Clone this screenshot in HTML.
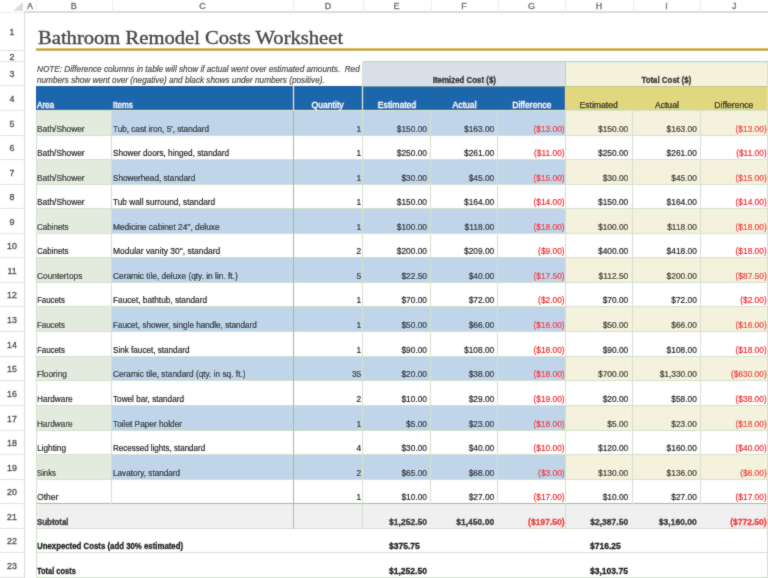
<!DOCTYPE html>
<html><head><meta charset="utf-8"><style>
html,body{margin:0;padding:0;}
body{width:768px;height:578px;overflow:hidden;position:relative;background:#fff;font-family:'Liberation Sans', sans-serif;}
#w{position:absolute;left:0;top:0;width:768px;height:578px;filter:url(#bl);}
#w>div{position:absolute;}

.t{white-space:nowrap;-webkit-text-stroke:0.18px currentColor;}
</style></head><body><svg width="0" height="0" style="position:absolute"><filter id="bl" x="0" y="0" width="100%" height="100%"><feConvolveMatrix order="3" kernelMatrix="1 2 1 2 20 2 1 2 1" divisor="32" edgeMode="duplicate"/></filter></svg><div id="w">
<div style="left:0.00px;top:0.00px;width:768.00px;height:12.00px;background:#ffffff"></div>
<div style="left:24.00px;top:11.00px;width:744.00px;height:2.00px;background:#dcdcdc"></div>
<div style="left:0.00px;top:11.50px;width:24.00px;height:1.00px;background:#f0f0f0"></div>
<div style="left:23.50px;top:12.00px;width:1.50px;height:566.00px;background:#dadada"></div>
<svg style="position:absolute;left:13px;top:2px" width="10" height="9"><polygon points="10,0 10,9 0,9" fill="#dcdcdc"/></svg>
<div class="t" style="left:24.00px;width:12.00px;text-align:center;top:1.78px;font-size:9px;line-height:9px;color:#6a6a6a;font-weight:normal;font-style:normal;font-family:'Liberation Sans', sans-serif;-webkit-text-stroke:0.4px #6a6a6a;">A</div>
<div style="left:36.00px;top:0.00px;width:1.00px;height:12.00px;background:#ececec"></div>
<div class="t" style="left:36.00px;width:75.50px;text-align:center;top:1.78px;font-size:9px;line-height:9px;color:#6a6a6a;font-weight:normal;font-style:normal;font-family:'Liberation Sans', sans-serif;-webkit-text-stroke:0.4px #6a6a6a;">B</div>
<div style="left:111.50px;top:0.00px;width:1.00px;height:12.00px;background:#ececec"></div>
<div class="t" style="left:111.50px;width:181.80px;text-align:center;top:1.78px;font-size:9px;line-height:9px;color:#6a6a6a;font-weight:normal;font-style:normal;font-family:'Liberation Sans', sans-serif;-webkit-text-stroke:0.4px #6a6a6a;">C</div>
<div style="left:293.30px;top:0.00px;width:1.00px;height:12.00px;background:#ececec"></div>
<div class="t" style="left:293.30px;width:69.20px;text-align:center;top:1.78px;font-size:9px;line-height:9px;color:#6a6a6a;font-weight:normal;font-style:normal;font-family:'Liberation Sans', sans-serif;-webkit-text-stroke:0.4px #6a6a6a;">D</div>
<div style="left:362.50px;top:0.00px;width:1.00px;height:12.00px;background:#ececec"></div>
<div class="t" style="left:362.50px;width:68.00px;text-align:center;top:1.78px;font-size:9px;line-height:9px;color:#6a6a6a;font-weight:normal;font-style:normal;font-family:'Liberation Sans', sans-serif;-webkit-text-stroke:0.4px #6a6a6a;">E</div>
<div style="left:430.50px;top:0.00px;width:1.00px;height:12.00px;background:#ececec"></div>
<div class="t" style="left:430.50px;width:67.20px;text-align:center;top:1.78px;font-size:9px;line-height:9px;color:#6a6a6a;font-weight:normal;font-style:normal;font-family:'Liberation Sans', sans-serif;-webkit-text-stroke:0.4px #6a6a6a;">F</div>
<div style="left:497.70px;top:0.00px;width:1.00px;height:12.00px;background:#ececec"></div>
<div class="t" style="left:497.70px;width:67.60px;text-align:center;top:1.78px;font-size:9px;line-height:9px;color:#6a6a6a;font-weight:normal;font-style:normal;font-family:'Liberation Sans', sans-serif;-webkit-text-stroke:0.4px #6a6a6a;">G</div>
<div style="left:565.30px;top:0.00px;width:1.00px;height:12.00px;background:#ececec"></div>
<div class="t" style="left:565.30px;width:67.20px;text-align:center;top:1.78px;font-size:9px;line-height:9px;color:#6a6a6a;font-weight:normal;font-style:normal;font-family:'Liberation Sans', sans-serif;-webkit-text-stroke:0.4px #6a6a6a;">H</div>
<div style="left:632.50px;top:0.00px;width:1.00px;height:12.00px;background:#ececec"></div>
<div class="t" style="left:632.50px;width:67.80px;text-align:center;top:1.78px;font-size:9px;line-height:9px;color:#6a6a6a;font-weight:normal;font-style:normal;font-family:'Liberation Sans', sans-serif;-webkit-text-stroke:0.4px #6a6a6a;">I</div>
<div style="left:700.30px;top:0.00px;width:1.00px;height:12.00px;background:#ececec"></div>
<div class="t" style="left:700.30px;width:67.70px;text-align:center;top:1.78px;font-size:9px;line-height:9px;color:#6a6a6a;font-weight:normal;font-style:normal;font-family:'Liberation Sans', sans-serif;-webkit-text-stroke:0.4px #6a6a6a;">J</div>
<div class="t" style="left:0.00px;width:24.00px;text-align:center;top:27.80px;font-size:8.8px;line-height:8.8px;color:#555;font-weight:normal;font-style:normal;font-family:'Liberation Sans', sans-serif;-webkit-text-stroke:0.35px #555;">1</div>
<div style="left:0.00px;top:50.00px;width:24.00px;height:1.00px;background:#e2e2e2"></div>
<div class="t" style="left:0.00px;width:24.00px;text-align:center;top:52.55px;font-size:8.8px;line-height:8.8px;color:#555;font-weight:normal;font-style:normal;font-family:'Liberation Sans', sans-serif;-webkit-text-stroke:0.35px #555;">2</div>
<div style="left:0.00px;top:61.00px;width:24.00px;height:1.00px;background:#e2e2e2"></div>
<div class="t" style="left:0.00px;width:24.00px;text-align:center;top:70.05px;font-size:8.8px;line-height:8.8px;color:#555;font-weight:normal;font-style:normal;font-family:'Liberation Sans', sans-serif;-webkit-text-stroke:0.35px #555;">3</div>
<div style="left:0.00px;top:85.00px;width:24.00px;height:1.00px;background:#e2e2e2"></div>
<div class="t" style="left:0.00px;width:24.00px;text-align:center;top:94.55px;font-size:8.8px;line-height:8.8px;color:#555;font-weight:normal;font-style:normal;font-family:'Liberation Sans', sans-serif;-webkit-text-stroke:0.35px #555;">4</div>
<div style="left:0.00px;top:110.00px;width:24.00px;height:1.00px;background:#e2e2e2"></div>
<div class="t" style="left:0.00px;width:24.00px;text-align:center;top:119.55px;font-size:8.8px;line-height:8.8px;color:#555;font-weight:normal;font-style:normal;font-family:'Liberation Sans', sans-serif;-webkit-text-stroke:0.35px #555;">5</div>
<div style="left:0.00px;top:135.00px;width:24.00px;height:1.00px;background:#e2e2e2"></div>
<div class="t" style="left:0.00px;width:24.00px;text-align:center;top:144.05px;font-size:8.8px;line-height:8.8px;color:#555;font-weight:normal;font-style:normal;font-family:'Liberation Sans', sans-serif;-webkit-text-stroke:0.35px #555;">6</div>
<div style="left:0.00px;top:159.00px;width:24.00px;height:1.00px;background:#e2e2e2"></div>
<div class="t" style="left:0.00px;width:24.00px;text-align:center;top:168.55px;font-size:8.8px;line-height:8.8px;color:#555;font-weight:normal;font-style:normal;font-family:'Liberation Sans', sans-serif;-webkit-text-stroke:0.35px #555;">7</div>
<div style="left:0.00px;top:184.00px;width:24.00px;height:1.00px;background:#e2e2e2"></div>
<div class="t" style="left:0.00px;width:24.00px;text-align:center;top:193.05px;font-size:8.8px;line-height:8.8px;color:#555;font-weight:normal;font-style:normal;font-family:'Liberation Sans', sans-serif;-webkit-text-stroke:0.35px #555;">8</div>
<div style="left:0.00px;top:208.00px;width:24.00px;height:1.00px;background:#e2e2e2"></div>
<div class="t" style="left:0.00px;width:24.00px;text-align:center;top:217.55px;font-size:8.8px;line-height:8.8px;color:#555;font-weight:normal;font-style:normal;font-family:'Liberation Sans', sans-serif;-webkit-text-stroke:0.35px #555;">9</div>
<div style="left:0.00px;top:233.00px;width:24.00px;height:1.00px;background:#e2e2e2"></div>
<div class="t" style="left:0.00px;width:24.00px;text-align:center;top:242.05px;font-size:8.8px;line-height:8.8px;color:#555;font-weight:normal;font-style:normal;font-family:'Liberation Sans', sans-serif;-webkit-text-stroke:0.35px #555;">10</div>
<div style="left:0.00px;top:257.00px;width:24.00px;height:1.00px;background:#e2e2e2"></div>
<div class="t" style="left:0.00px;width:24.00px;text-align:center;top:266.55px;font-size:8.8px;line-height:8.8px;color:#555;font-weight:normal;font-style:normal;font-family:'Liberation Sans', sans-serif;-webkit-text-stroke:0.35px #555;">11</div>
<div style="left:0.00px;top:282.00px;width:24.00px;height:1.00px;background:#e2e2e2"></div>
<div class="t" style="left:0.00px;width:24.00px;text-align:center;top:291.05px;font-size:8.8px;line-height:8.8px;color:#555;font-weight:normal;font-style:normal;font-family:'Liberation Sans', sans-serif;-webkit-text-stroke:0.35px #555;">12</div>
<div style="left:0.00px;top:306.00px;width:24.00px;height:1.00px;background:#e2e2e2"></div>
<div class="t" style="left:0.00px;width:24.00px;text-align:center;top:315.55px;font-size:8.8px;line-height:8.8px;color:#555;font-weight:normal;font-style:normal;font-family:'Liberation Sans', sans-serif;-webkit-text-stroke:0.35px #555;">13</div>
<div style="left:0.00px;top:331.00px;width:24.00px;height:1.00px;background:#e2e2e2"></div>
<div class="t" style="left:0.00px;width:24.00px;text-align:center;top:340.55px;font-size:8.8px;line-height:8.8px;color:#555;font-weight:normal;font-style:normal;font-family:'Liberation Sans', sans-serif;-webkit-text-stroke:0.35px #555;">14</div>
<div style="left:0.00px;top:356.00px;width:24.00px;height:1.00px;background:#e2e2e2"></div>
<div class="t" style="left:0.00px;width:24.00px;text-align:center;top:365.05px;font-size:8.8px;line-height:8.8px;color:#555;font-weight:normal;font-style:normal;font-family:'Liberation Sans', sans-serif;-webkit-text-stroke:0.35px #555;">15</div>
<div style="left:0.00px;top:380.00px;width:24.00px;height:1.00px;background:#e2e2e2"></div>
<div class="t" style="left:0.00px;width:24.00px;text-align:center;top:389.55px;font-size:8.8px;line-height:8.8px;color:#555;font-weight:normal;font-style:normal;font-family:'Liberation Sans', sans-serif;-webkit-text-stroke:0.35px #555;">16</div>
<div style="left:0.00px;top:405.00px;width:24.00px;height:1.00px;background:#e2e2e2"></div>
<div class="t" style="left:0.00px;width:24.00px;text-align:center;top:414.55px;font-size:8.8px;line-height:8.8px;color:#555;font-weight:normal;font-style:normal;font-family:'Liberation Sans', sans-serif;-webkit-text-stroke:0.35px #555;">17</div>
<div style="left:0.00px;top:430.00px;width:24.00px;height:1.00px;background:#e2e2e2"></div>
<div class="t" style="left:0.00px;width:24.00px;text-align:center;top:439.05px;font-size:8.8px;line-height:8.8px;color:#555;font-weight:normal;font-style:normal;font-family:'Liberation Sans', sans-serif;-webkit-text-stroke:0.35px #555;">18</div>
<div style="left:0.00px;top:454.00px;width:24.00px;height:1.00px;background:#e2e2e2"></div>
<div class="t" style="left:0.00px;width:24.00px;text-align:center;top:463.55px;font-size:8.8px;line-height:8.8px;color:#555;font-weight:normal;font-style:normal;font-family:'Liberation Sans', sans-serif;-webkit-text-stroke:0.35px #555;">19</div>
<div style="left:0.00px;top:479.00px;width:24.00px;height:1.00px;background:#e2e2e2"></div>
<div class="t" style="left:0.00px;width:24.00px;text-align:center;top:488.05px;font-size:8.8px;line-height:8.8px;color:#555;font-weight:normal;font-style:normal;font-family:'Liberation Sans', sans-serif;-webkit-text-stroke:0.35px #555;">20</div>
<div style="left:0.00px;top:503.00px;width:24.00px;height:1.00px;background:#e2e2e2"></div>
<div class="t" style="left:0.00px;width:24.00px;text-align:center;top:512.55px;font-size:8.8px;line-height:8.8px;color:#555;font-weight:normal;font-style:normal;font-family:'Liberation Sans', sans-serif;-webkit-text-stroke:0.35px #555;">21</div>
<div style="left:0.00px;top:528.00px;width:24.00px;height:1.00px;background:#e2e2e2"></div>
<div class="t" style="left:0.00px;width:24.00px;text-align:center;top:537.05px;font-size:8.8px;line-height:8.8px;color:#555;font-weight:normal;font-style:normal;font-family:'Liberation Sans', sans-serif;-webkit-text-stroke:0.35px #555;">22</div>
<div style="left:0.00px;top:552.00px;width:24.00px;height:1.00px;background:#e2e2e2"></div>
<div class="t" style="left:0.00px;width:24.00px;text-align:center;top:561.55px;font-size:8.8px;line-height:8.8px;color:#555;font-weight:normal;font-style:normal;font-family:'Liberation Sans', sans-serif;-webkit-text-stroke:0.35px #555;">23</div>
<div style="left:0.00px;top:577.00px;width:24.00px;height:1.00px;background:#e2e2e2"></div>
<div class="t" style="left:37.90px;top:29.06px;font-size:18.6px;line-height:18.6px;color:#474747;font-weight:normal;font-style:normal;font-family:'Liberation Serif', serif;-webkit-text-stroke:0.35px #474747;transform:scaleX(1.1075743962021307);transform-origin:0 0;">Bathroom Remodel Costs Worksheet</div>
<div style="left:36.00px;top:48.00px;width:732.00px;height:1.00px;background:#dcc277"></div>
<div style="left:36.00px;top:49.00px;width:732.00px;height:1.00px;background:#c49a18"></div>
<div style="left:36.00px;top:50.00px;width:732.00px;height:1.00px;background:#d6b862"></div>
<div class="t" style="left:37.00px;top:65.08px;font-size:9.0px;line-height:9.0px;color:#4d4d4d;font-weight:normal;font-style:italic;font-family:'Liberation Sans', sans-serif;-webkit-text-stroke:0.22px #4d4d4d;transform:scaleX(0.91);transform-origin:0 0;">NOTE: Difference columns in table will show if actual went over estimated amounts.&nbsp; Red</div>
<div class="t" style="left:37.00px;top:75.68px;font-size:9.0px;line-height:9.0px;color:#4d4d4d;font-weight:normal;font-style:italic;font-family:'Liberation Sans', sans-serif;-webkit-text-stroke:0.22px #4d4d4d;transform:scaleX(0.91);transform-origin:0 0;">numbers show went over (negative) and black shows under numbers (positive).</div>
<div style="left:362.50px;top:61.50px;width:202.80px;height:24.00px;background:#dadfea"></div>
<div style="left:565.30px;top:61.50px;width:202.70px;height:24.00px;background:#f5f2dc"></div>
<div class="t" style="left:362.50px;width:202.80px;text-align:center;top:75.97px;font-size:8.9px;line-height:8.9px;color:#1c1c1c;font-weight:bold;font-style:normal;font-family:'Liberation Sans', sans-serif;-webkit-text-stroke:0.3px currentColor;transform:scaleX(0.89);transform-origin:50% 0;">Itemized Cost ($)</div>
<div class="t" style="left:565.30px;width:202.70px;text-align:center;top:75.97px;font-size:8.9px;line-height:8.9px;color:#1c1c1c;font-weight:bold;font-style:normal;font-family:'Liberation Sans', sans-serif;-webkit-text-stroke:0.3px currentColor;transform:scaleX(0.89);transform-origin:50% 0;">Total Cost ($)</div>
<div style="left:36.00px;top:85.50px;width:529.30px;height:25.00px;background:#1a66ab"></div>
<div style="left:565.30px;top:85.50px;width:202.70px;height:25.00px;background:#e1d77e"></div>
<div class="t" style="left:37.00px;top:100.57px;font-size:8.9px;line-height:8.9px;color:#fff;font-weight:normal;font-style:normal;font-family:'Liberation Sans', sans-serif;-webkit-text-stroke:0.3px #fff;transform:scaleX(0.91);transform-origin:0 0;">Area</div>
<div class="t" style="left:113.00px;top:100.57px;font-size:8.9px;line-height:8.9px;color:#fff;font-weight:normal;font-style:normal;font-family:'Liberation Sans', sans-serif;-webkit-text-stroke:0.3px #fff;transform:scaleX(0.91);transform-origin:0 0;">Items</div>
<div class="t" style="left:293.30px;width:69.20px;text-align:center;top:100.57px;font-size:8.9px;line-height:8.9px;color:#fff;font-weight:normal;font-style:normal;font-family:'Liberation Sans', sans-serif;-webkit-text-stroke:0.3px #fff;transform:scaleX(0.97);transform-origin:50% 0;">Quantity</div>
<div class="t" style="left:362.50px;width:68.00px;text-align:center;top:100.57px;font-size:8.9px;line-height:8.9px;color:#fff;font-weight:normal;font-style:normal;font-family:'Liberation Sans', sans-serif;-webkit-text-stroke:0.3px #fff;transform:scaleX(0.97);transform-origin:50% 0;">Estimated</div>
<div class="t" style="left:565.30px;width:67.20px;text-align:center;top:100.57px;font-size:8.9px;line-height:8.9px;color:#1c1c1c;font-weight:normal;font-style:normal;font-family:'Liberation Sans', sans-serif;-webkit-text-stroke:0.25px #1c1c1c;transform:scaleX(0.97);transform-origin:50% 0;">Estimated</div>
<div class="t" style="left:430.50px;width:67.20px;text-align:center;top:100.57px;font-size:8.9px;line-height:8.9px;color:#fff;font-weight:normal;font-style:normal;font-family:'Liberation Sans', sans-serif;-webkit-text-stroke:0.3px #fff;transform:scaleX(0.97);transform-origin:50% 0;">Actual</div>
<div class="t" style="left:632.50px;width:67.80px;text-align:center;top:100.57px;font-size:8.9px;line-height:8.9px;color:#1c1c1c;font-weight:normal;font-style:normal;font-family:'Liberation Sans', sans-serif;-webkit-text-stroke:0.25px #1c1c1c;transform:scaleX(0.97);transform-origin:50% 0;">Actual</div>
<div class="t" style="left:497.70px;width:67.60px;text-align:center;top:100.57px;font-size:8.9px;line-height:8.9px;color:#fff;font-weight:normal;font-style:normal;font-family:'Liberation Sans', sans-serif;-webkit-text-stroke:0.3px #fff;transform:scaleX(0.97);transform-origin:50% 0;">Difference</div>
<div class="t" style="left:700.30px;width:67.70px;text-align:center;top:100.57px;font-size:8.9px;line-height:8.9px;color:#1c1c1c;font-weight:normal;font-style:normal;font-family:'Liberation Sans', sans-serif;-webkit-text-stroke:0.25px #1c1c1c;transform:scaleX(0.97);transform-origin:50% 0;">Difference</div>
<div style="left:36.00px;top:110.50px;width:75.50px;height:25.00px;background:#e3ebdf"></div>
<div style="left:111.50px;top:110.50px;width:453.80px;height:25.00px;background:#c0d5e9"></div>
<div style="left:565.30px;top:110.50px;width:202.70px;height:25.00px;background:#f4f1dc"></div>
<div class="t" style="left:37.00px;top:125.37px;font-size:8.9px;line-height:8.9px;color:#1c1c1c;font-weight:normal;font-style:normal;font-family:'Liberation Sans', sans-serif;transform:scaleX(0.936739111112179);transform-origin:0 0;">Bath/Shower</div>
<div class="t" style="left:113.00px;top:125.37px;font-size:8.9px;line-height:8.9px;color:#1c1c1c;font-weight:normal;font-style:normal;font-family:'Liberation Sans', sans-serif;transform:scaleX(0.9189501211740209);transform-origin:0 0;">Tub, cast iron, 5', standard</div>
<div class="t" style="left:293.30px;width:68.20px;text-align:right;top:125.11px;font-size:9.2px;line-height:9.2px;color:#1c1c1c;font-weight:normal;font-style:normal;font-family:'Liberation Sans', sans-serif;transform:scaleX(0.9093478260869565);transform-origin:100% 0;">1</div>
<div class="t" style="left:362.50px;width:64.00px;text-align:right;top:125.11px;font-size:9.2px;line-height:9.2px;color:#1c1c1c;font-weight:normal;font-style:normal;font-family:'Liberation Sans', sans-serif;transform:scaleX(0.9093478260869565);transform-origin:100% 0;">$150.00</div>
<div class="t" style="left:430.50px;width:63.20px;text-align:right;top:125.11px;font-size:9.2px;line-height:9.2px;color:#1c1c1c;font-weight:normal;font-style:normal;font-family:'Liberation Sans', sans-serif;transform:scaleX(0.9093478260869565);transform-origin:100% 0;">$163.00</div>
<div class="t" style="left:497.70px;width:66.60px;text-align:right;top:125.11px;font-size:9.2px;line-height:9.2px;color:#f0262b;font-weight:normal;font-style:normal;font-family:'Liberation Sans', sans-serif;transform:scaleX(0.9093478260869565);transform-origin:100% 0;">($13.00)</div>
<div class="t" style="left:565.30px;width:63.20px;text-align:right;top:125.11px;font-size:9.2px;line-height:9.2px;color:#1c1c1c;font-weight:normal;font-style:normal;font-family:'Liberation Sans', sans-serif;transform:scaleX(0.9093478260869565);transform-origin:100% 0;">$150.00</div>
<div class="t" style="left:632.50px;width:63.80px;text-align:right;top:125.11px;font-size:9.2px;line-height:9.2px;color:#1c1c1c;font-weight:normal;font-style:normal;font-family:'Liberation Sans', sans-serif;transform:scaleX(0.9093478260869565);transform-origin:100% 0;">$163.00</div>
<div class="t" style="left:700.30px;width:66.70px;text-align:right;top:125.11px;font-size:9.2px;line-height:9.2px;color:#f0262b;font-weight:normal;font-style:normal;font-family:'Liberation Sans', sans-serif;transform:scaleX(0.9093478260869565);transform-origin:100% 0;">($13.00)</div>
<div class="t" style="left:37.00px;top:149.37px;font-size:8.9px;line-height:8.9px;color:#1c1c1c;font-weight:normal;font-style:normal;font-family:'Liberation Sans', sans-serif;transform:scaleX(0.936739111112179);transform-origin:0 0;">Bath/Shower</div>
<div class="t" style="left:113.00px;top:149.37px;font-size:8.9px;line-height:8.9px;color:#1c1c1c;font-weight:normal;font-style:normal;font-family:'Liberation Sans', sans-serif;transform:scaleX(0.9228196957994869);transform-origin:0 0;">Shower doors, hinged, standard</div>
<div class="t" style="left:293.30px;width:68.20px;text-align:right;top:149.11px;font-size:9.2px;line-height:9.2px;color:#1c1c1c;font-weight:normal;font-style:normal;font-family:'Liberation Sans', sans-serif;transform:scaleX(0.9093478260869565);transform-origin:100% 0;">1</div>
<div class="t" style="left:362.50px;width:64.00px;text-align:right;top:149.11px;font-size:9.2px;line-height:9.2px;color:#1c1c1c;font-weight:normal;font-style:normal;font-family:'Liberation Sans', sans-serif;transform:scaleX(0.9093478260869565);transform-origin:100% 0;">$250.00</div>
<div class="t" style="left:430.50px;width:63.20px;text-align:right;top:149.11px;font-size:9.2px;line-height:9.2px;color:#1c1c1c;font-weight:normal;font-style:normal;font-family:'Liberation Sans', sans-serif;transform:scaleX(0.9093478260869565);transform-origin:100% 0;">$261.00</div>
<div class="t" style="left:497.70px;width:66.60px;text-align:right;top:149.11px;font-size:9.2px;line-height:9.2px;color:#f0262b;font-weight:normal;font-style:normal;font-family:'Liberation Sans', sans-serif;transform:scaleX(0.9093478260869565);transform-origin:100% 0;">($11.00)</div>
<div class="t" style="left:565.30px;width:63.20px;text-align:right;top:149.11px;font-size:9.2px;line-height:9.2px;color:#1c1c1c;font-weight:normal;font-style:normal;font-family:'Liberation Sans', sans-serif;transform:scaleX(0.9093478260869565);transform-origin:100% 0;">$250.00</div>
<div class="t" style="left:632.50px;width:63.80px;text-align:right;top:149.11px;font-size:9.2px;line-height:9.2px;color:#1c1c1c;font-weight:normal;font-style:normal;font-family:'Liberation Sans', sans-serif;transform:scaleX(0.9093478260869565);transform-origin:100% 0;">$261.00</div>
<div class="t" style="left:700.30px;width:66.70px;text-align:right;top:149.11px;font-size:9.2px;line-height:9.2px;color:#f0262b;font-weight:normal;font-style:normal;font-family:'Liberation Sans', sans-serif;transform:scaleX(0.9093478260869565);transform-origin:100% 0;">($11.00)</div>
<div style="left:36.00px;top:159.50px;width:75.50px;height:25.00px;background:#e3ebdf"></div>
<div style="left:111.50px;top:159.50px;width:453.80px;height:25.00px;background:#c0d5e9"></div>
<div style="left:565.30px;top:159.50px;width:202.70px;height:25.00px;background:#f4f1dc"></div>
<div class="t" style="left:37.00px;top:174.37px;font-size:8.9px;line-height:8.9px;color:#1c1c1c;font-weight:normal;font-style:normal;font-family:'Liberation Sans', sans-serif;transform:scaleX(0.936739111112179);transform-origin:0 0;">Bath/Shower</div>
<div class="t" style="left:113.00px;top:174.37px;font-size:8.9px;line-height:8.9px;color:#1c1c1c;font-weight:normal;font-style:normal;font-family:'Liberation Sans', sans-serif;transform:scaleX(0.9215641676143821);transform-origin:0 0;">Showerhead, standard</div>
<div class="t" style="left:293.30px;width:68.20px;text-align:right;top:174.11px;font-size:9.2px;line-height:9.2px;color:#1c1c1c;font-weight:normal;font-style:normal;font-family:'Liberation Sans', sans-serif;transform:scaleX(0.9093478260869565);transform-origin:100% 0;">1</div>
<div class="t" style="left:362.50px;width:64.00px;text-align:right;top:174.11px;font-size:9.2px;line-height:9.2px;color:#1c1c1c;font-weight:normal;font-style:normal;font-family:'Liberation Sans', sans-serif;transform:scaleX(0.9093478260869565);transform-origin:100% 0;">$30.00</div>
<div class="t" style="left:430.50px;width:63.20px;text-align:right;top:174.11px;font-size:9.2px;line-height:9.2px;color:#1c1c1c;font-weight:normal;font-style:normal;font-family:'Liberation Sans', sans-serif;transform:scaleX(0.9093478260869565);transform-origin:100% 0;">$45.00</div>
<div class="t" style="left:497.70px;width:66.60px;text-align:right;top:174.11px;font-size:9.2px;line-height:9.2px;color:#f0262b;font-weight:normal;font-style:normal;font-family:'Liberation Sans', sans-serif;transform:scaleX(0.9093478260869565);transform-origin:100% 0;">($15.00)</div>
<div class="t" style="left:565.30px;width:63.20px;text-align:right;top:174.11px;font-size:9.2px;line-height:9.2px;color:#1c1c1c;font-weight:normal;font-style:normal;font-family:'Liberation Sans', sans-serif;transform:scaleX(0.9093478260869565);transform-origin:100% 0;">$30.00</div>
<div class="t" style="left:632.50px;width:63.80px;text-align:right;top:174.11px;font-size:9.2px;line-height:9.2px;color:#1c1c1c;font-weight:normal;font-style:normal;font-family:'Liberation Sans', sans-serif;transform:scaleX(0.9093478260869565);transform-origin:100% 0;">$45.00</div>
<div class="t" style="left:700.30px;width:66.70px;text-align:right;top:174.11px;font-size:9.2px;line-height:9.2px;color:#f0262b;font-weight:normal;font-style:normal;font-family:'Liberation Sans', sans-serif;transform:scaleX(0.9093478260869565);transform-origin:100% 0;">($15.00)</div>
<div class="t" style="left:37.00px;top:198.37px;font-size:8.9px;line-height:8.9px;color:#1c1c1c;font-weight:normal;font-style:normal;font-family:'Liberation Sans', sans-serif;transform:scaleX(0.936739111112179);transform-origin:0 0;">Bath/Shower</div>
<div class="t" style="left:113.00px;top:198.37px;font-size:8.9px;line-height:8.9px;color:#1c1c1c;font-weight:normal;font-style:normal;font-family:'Liberation Sans', sans-serif;transform:scaleX(0.9317995927659474);transform-origin:0 0;">Tub wall surround, standard</div>
<div class="t" style="left:293.30px;width:68.20px;text-align:right;top:198.11px;font-size:9.2px;line-height:9.2px;color:#1c1c1c;font-weight:normal;font-style:normal;font-family:'Liberation Sans', sans-serif;transform:scaleX(0.9093478260869565);transform-origin:100% 0;">1</div>
<div class="t" style="left:362.50px;width:64.00px;text-align:right;top:198.11px;font-size:9.2px;line-height:9.2px;color:#1c1c1c;font-weight:normal;font-style:normal;font-family:'Liberation Sans', sans-serif;transform:scaleX(0.9093478260869565);transform-origin:100% 0;">$150.00</div>
<div class="t" style="left:430.50px;width:63.20px;text-align:right;top:198.11px;font-size:9.2px;line-height:9.2px;color:#1c1c1c;font-weight:normal;font-style:normal;font-family:'Liberation Sans', sans-serif;transform:scaleX(0.9093478260869565);transform-origin:100% 0;">$164.00</div>
<div class="t" style="left:497.70px;width:66.60px;text-align:right;top:198.11px;font-size:9.2px;line-height:9.2px;color:#f0262b;font-weight:normal;font-style:normal;font-family:'Liberation Sans', sans-serif;transform:scaleX(0.9093478260869565);transform-origin:100% 0;">($14.00)</div>
<div class="t" style="left:565.30px;width:63.20px;text-align:right;top:198.11px;font-size:9.2px;line-height:9.2px;color:#1c1c1c;font-weight:normal;font-style:normal;font-family:'Liberation Sans', sans-serif;transform:scaleX(0.9093478260869565);transform-origin:100% 0;">$150.00</div>
<div class="t" style="left:632.50px;width:63.80px;text-align:right;top:198.11px;font-size:9.2px;line-height:9.2px;color:#1c1c1c;font-weight:normal;font-style:normal;font-family:'Liberation Sans', sans-serif;transform:scaleX(0.9093478260869565);transform-origin:100% 0;">$164.00</div>
<div class="t" style="left:700.30px;width:66.70px;text-align:right;top:198.11px;font-size:9.2px;line-height:9.2px;color:#f0262b;font-weight:normal;font-style:normal;font-family:'Liberation Sans', sans-serif;transform:scaleX(0.9093478260869565);transform-origin:100% 0;">($14.00)</div>
<div style="left:36.00px;top:208.50px;width:75.50px;height:25.00px;background:#e3ebdf"></div>
<div style="left:111.50px;top:208.50px;width:453.80px;height:25.00px;background:#c0d5e9"></div>
<div style="left:565.30px;top:208.50px;width:202.70px;height:25.00px;background:#f4f1dc"></div>
<div class="t" style="left:37.00px;top:223.37px;font-size:8.9px;line-height:8.9px;color:#1c1c1c;font-weight:normal;font-style:normal;font-family:'Liberation Sans', sans-serif;transform:scaleX(0.9021444764093658);transform-origin:0 0;">Cabinets</div>
<div class="t" style="left:113.00px;top:223.37px;font-size:8.9px;line-height:8.9px;color:#1c1c1c;font-weight:normal;font-style:normal;font-family:'Liberation Sans', sans-serif;transform:scaleX(0.942799514193447);transform-origin:0 0;">Medicine cabinet 24&quot;, deluxe</div>
<div class="t" style="left:293.30px;width:68.20px;text-align:right;top:223.11px;font-size:9.2px;line-height:9.2px;color:#1c1c1c;font-weight:normal;font-style:normal;font-family:'Liberation Sans', sans-serif;transform:scaleX(0.9093478260869565);transform-origin:100% 0;">1</div>
<div class="t" style="left:362.50px;width:64.00px;text-align:right;top:223.11px;font-size:9.2px;line-height:9.2px;color:#1c1c1c;font-weight:normal;font-style:normal;font-family:'Liberation Sans', sans-serif;transform:scaleX(0.9093478260869565);transform-origin:100% 0;">$100.00</div>
<div class="t" style="left:430.50px;width:63.20px;text-align:right;top:223.11px;font-size:9.2px;line-height:9.2px;color:#1c1c1c;font-weight:normal;font-style:normal;font-family:'Liberation Sans', sans-serif;transform:scaleX(0.9093478260869565);transform-origin:100% 0;">$118.00</div>
<div class="t" style="left:497.70px;width:66.60px;text-align:right;top:223.11px;font-size:9.2px;line-height:9.2px;color:#f0262b;font-weight:normal;font-style:normal;font-family:'Liberation Sans', sans-serif;transform:scaleX(0.9093478260869565);transform-origin:100% 0;">($18.00)</div>
<div class="t" style="left:565.30px;width:63.20px;text-align:right;top:223.11px;font-size:9.2px;line-height:9.2px;color:#1c1c1c;font-weight:normal;font-style:normal;font-family:'Liberation Sans', sans-serif;transform:scaleX(0.9093478260869565);transform-origin:100% 0;">$100.00</div>
<div class="t" style="left:632.50px;width:63.80px;text-align:right;top:223.11px;font-size:9.2px;line-height:9.2px;color:#1c1c1c;font-weight:normal;font-style:normal;font-family:'Liberation Sans', sans-serif;transform:scaleX(0.9093478260869565);transform-origin:100% 0;">$118.00</div>
<div class="t" style="left:700.30px;width:66.70px;text-align:right;top:223.11px;font-size:9.2px;line-height:9.2px;color:#f0262b;font-weight:normal;font-style:normal;font-family:'Liberation Sans', sans-serif;transform:scaleX(0.9093478260869565);transform-origin:100% 0;">($18.00)</div>
<div class="t" style="left:37.00px;top:247.37px;font-size:8.9px;line-height:8.9px;color:#1c1c1c;font-weight:normal;font-style:normal;font-family:'Liberation Sans', sans-serif;transform:scaleX(0.9021444764093658);transform-origin:0 0;">Cabinets</div>
<div class="t" style="left:113.00px;top:247.37px;font-size:8.9px;line-height:8.9px;color:#1c1c1c;font-weight:normal;font-style:normal;font-family:'Liberation Sans', sans-serif;transform:scaleX(0.9523310942578549);transform-origin:0 0;">Modular vanity 30&quot;, standard</div>
<div class="t" style="left:293.30px;width:68.20px;text-align:right;top:247.11px;font-size:9.2px;line-height:9.2px;color:#1c1c1c;font-weight:normal;font-style:normal;font-family:'Liberation Sans', sans-serif;transform:scaleX(0.9093478260869565);transform-origin:100% 0;">2</div>
<div class="t" style="left:362.50px;width:64.00px;text-align:right;top:247.11px;font-size:9.2px;line-height:9.2px;color:#1c1c1c;font-weight:normal;font-style:normal;font-family:'Liberation Sans', sans-serif;transform:scaleX(0.9093478260869565);transform-origin:100% 0;">$200.00</div>
<div class="t" style="left:430.50px;width:63.20px;text-align:right;top:247.11px;font-size:9.2px;line-height:9.2px;color:#1c1c1c;font-weight:normal;font-style:normal;font-family:'Liberation Sans', sans-serif;transform:scaleX(0.9093478260869565);transform-origin:100% 0;">$209.00</div>
<div class="t" style="left:497.70px;width:66.60px;text-align:right;top:247.11px;font-size:9.2px;line-height:9.2px;color:#f0262b;font-weight:normal;font-style:normal;font-family:'Liberation Sans', sans-serif;transform:scaleX(0.9093478260869565);transform-origin:100% 0;">($9.00)</div>
<div class="t" style="left:565.30px;width:63.20px;text-align:right;top:247.11px;font-size:9.2px;line-height:9.2px;color:#1c1c1c;font-weight:normal;font-style:normal;font-family:'Liberation Sans', sans-serif;transform:scaleX(0.9093478260869565);transform-origin:100% 0;">$400.00</div>
<div class="t" style="left:632.50px;width:63.80px;text-align:right;top:247.11px;font-size:9.2px;line-height:9.2px;color:#1c1c1c;font-weight:normal;font-style:normal;font-family:'Liberation Sans', sans-serif;transform:scaleX(0.9093478260869565);transform-origin:100% 0;">$418.00</div>
<div class="t" style="left:700.30px;width:66.70px;text-align:right;top:247.11px;font-size:9.2px;line-height:9.2px;color:#f0262b;font-weight:normal;font-style:normal;font-family:'Liberation Sans', sans-serif;transform:scaleX(0.9093478260869565);transform-origin:100% 0;">($18.00)</div>
<div style="left:36.00px;top:257.50px;width:75.50px;height:25.00px;background:#e3ebdf"></div>
<div style="left:111.50px;top:257.50px;width:453.80px;height:25.00px;background:#c0d5e9"></div>
<div style="left:565.30px;top:257.50px;width:202.70px;height:25.00px;background:#f4f1dc"></div>
<div class="t" style="left:37.00px;top:272.37px;font-size:8.9px;line-height:8.9px;color:#1c1c1c;font-weight:normal;font-style:normal;font-family:'Liberation Sans', sans-serif;transform:scaleX(0.9369412495408052);transform-origin:0 0;">Countertops</div>
<div class="t" style="left:113.00px;top:272.37px;font-size:8.9px;line-height:8.9px;color:#1c1c1c;font-weight:normal;font-style:normal;font-family:'Liberation Sans', sans-serif;transform:scaleX(0.9375760214444979);transform-origin:0 0;">Ceramic tile, deluxe (qty. in lin. ft.)</div>
<div class="t" style="left:293.30px;width:68.20px;text-align:right;top:272.11px;font-size:9.2px;line-height:9.2px;color:#1c1c1c;font-weight:normal;font-style:normal;font-family:'Liberation Sans', sans-serif;transform:scaleX(0.9093478260869565);transform-origin:100% 0;">5</div>
<div class="t" style="left:362.50px;width:64.00px;text-align:right;top:272.11px;font-size:9.2px;line-height:9.2px;color:#1c1c1c;font-weight:normal;font-style:normal;font-family:'Liberation Sans', sans-serif;transform:scaleX(0.9093478260869565);transform-origin:100% 0;">$22.50</div>
<div class="t" style="left:430.50px;width:63.20px;text-align:right;top:272.11px;font-size:9.2px;line-height:9.2px;color:#1c1c1c;font-weight:normal;font-style:normal;font-family:'Liberation Sans', sans-serif;transform:scaleX(0.9093478260869565);transform-origin:100% 0;">$40.00</div>
<div class="t" style="left:497.70px;width:66.60px;text-align:right;top:272.11px;font-size:9.2px;line-height:9.2px;color:#f0262b;font-weight:normal;font-style:normal;font-family:'Liberation Sans', sans-serif;transform:scaleX(0.9093478260869565);transform-origin:100% 0;">($17.50)</div>
<div class="t" style="left:565.30px;width:63.20px;text-align:right;top:272.11px;font-size:9.2px;line-height:9.2px;color:#1c1c1c;font-weight:normal;font-style:normal;font-family:'Liberation Sans', sans-serif;transform:scaleX(0.9093478260869565);transform-origin:100% 0;">$112.50</div>
<div class="t" style="left:632.50px;width:63.80px;text-align:right;top:272.11px;font-size:9.2px;line-height:9.2px;color:#1c1c1c;font-weight:normal;font-style:normal;font-family:'Liberation Sans', sans-serif;transform:scaleX(0.9093478260869565);transform-origin:100% 0;">$200.00</div>
<div class="t" style="left:700.30px;width:66.70px;text-align:right;top:272.11px;font-size:9.2px;line-height:9.2px;color:#f0262b;font-weight:normal;font-style:normal;font-family:'Liberation Sans', sans-serif;transform:scaleX(0.9093478260869565);transform-origin:100% 0;">($87.50)</div>
<div class="t" style="left:37.00px;top:296.37px;font-size:8.9px;line-height:8.9px;color:#1c1c1c;font-weight:normal;font-style:normal;font-family:'Liberation Sans', sans-serif;transform:scaleX(0.8837638597542705);transform-origin:0 0;">Faucets</div>
<div class="t" style="left:113.00px;top:296.37px;font-size:8.9px;line-height:8.9px;color:#1c1c1c;font-weight:normal;font-style:normal;font-family:'Liberation Sans', sans-serif;transform:scaleX(0.929369878223928);transform-origin:0 0;">Faucet, bathtub, standard</div>
<div class="t" style="left:293.30px;width:68.20px;text-align:right;top:296.11px;font-size:9.2px;line-height:9.2px;color:#1c1c1c;font-weight:normal;font-style:normal;font-family:'Liberation Sans', sans-serif;transform:scaleX(0.9093478260869565);transform-origin:100% 0;">1</div>
<div class="t" style="left:362.50px;width:64.00px;text-align:right;top:296.11px;font-size:9.2px;line-height:9.2px;color:#1c1c1c;font-weight:normal;font-style:normal;font-family:'Liberation Sans', sans-serif;transform:scaleX(0.9093478260869565);transform-origin:100% 0;">$70.00</div>
<div class="t" style="left:430.50px;width:63.20px;text-align:right;top:296.11px;font-size:9.2px;line-height:9.2px;color:#1c1c1c;font-weight:normal;font-style:normal;font-family:'Liberation Sans', sans-serif;transform:scaleX(0.9093478260869565);transform-origin:100% 0;">$72.00</div>
<div class="t" style="left:497.70px;width:66.60px;text-align:right;top:296.11px;font-size:9.2px;line-height:9.2px;color:#f0262b;font-weight:normal;font-style:normal;font-family:'Liberation Sans', sans-serif;transform:scaleX(0.9093478260869565);transform-origin:100% 0;">($2.00)</div>
<div class="t" style="left:565.30px;width:63.20px;text-align:right;top:296.11px;font-size:9.2px;line-height:9.2px;color:#1c1c1c;font-weight:normal;font-style:normal;font-family:'Liberation Sans', sans-serif;transform:scaleX(0.9093478260869565);transform-origin:100% 0;">$70.00</div>
<div class="t" style="left:632.50px;width:63.80px;text-align:right;top:296.11px;font-size:9.2px;line-height:9.2px;color:#1c1c1c;font-weight:normal;font-style:normal;font-family:'Liberation Sans', sans-serif;transform:scaleX(0.9093478260869565);transform-origin:100% 0;">$72.00</div>
<div class="t" style="left:700.30px;width:66.70px;text-align:right;top:296.11px;font-size:9.2px;line-height:9.2px;color:#f0262b;font-weight:normal;font-style:normal;font-family:'Liberation Sans', sans-serif;transform:scaleX(0.9093478260869565);transform-origin:100% 0;">($2.00)</div>
<div style="left:36.00px;top:306.50px;width:75.50px;height:25.00px;background:#e3ebdf"></div>
<div style="left:111.50px;top:306.50px;width:453.80px;height:25.00px;background:#c0d5e9"></div>
<div style="left:565.30px;top:306.50px;width:202.70px;height:25.00px;background:#f4f1dc"></div>
<div class="t" style="left:37.00px;top:321.37px;font-size:8.9px;line-height:8.9px;color:#1c1c1c;font-weight:normal;font-style:normal;font-family:'Liberation Sans', sans-serif;transform:scaleX(0.8837638597542705);transform-origin:0 0;">Faucets</div>
<div class="t" style="left:113.00px;top:321.37px;font-size:8.9px;line-height:8.9px;color:#1c1c1c;font-weight:normal;font-style:normal;font-family:'Liberation Sans', sans-serif;transform:scaleX(0.9165711880373648);transform-origin:0 0;">Faucet, shower, single handle, standard</div>
<div class="t" style="left:293.30px;width:68.20px;text-align:right;top:321.11px;font-size:9.2px;line-height:9.2px;color:#1c1c1c;font-weight:normal;font-style:normal;font-family:'Liberation Sans', sans-serif;transform:scaleX(0.9093478260869565);transform-origin:100% 0;">1</div>
<div class="t" style="left:362.50px;width:64.00px;text-align:right;top:321.11px;font-size:9.2px;line-height:9.2px;color:#1c1c1c;font-weight:normal;font-style:normal;font-family:'Liberation Sans', sans-serif;transform:scaleX(0.9093478260869565);transform-origin:100% 0;">$50.00</div>
<div class="t" style="left:430.50px;width:63.20px;text-align:right;top:321.11px;font-size:9.2px;line-height:9.2px;color:#1c1c1c;font-weight:normal;font-style:normal;font-family:'Liberation Sans', sans-serif;transform:scaleX(0.9093478260869565);transform-origin:100% 0;">$66.00</div>
<div class="t" style="left:497.70px;width:66.60px;text-align:right;top:321.11px;font-size:9.2px;line-height:9.2px;color:#f0262b;font-weight:normal;font-style:normal;font-family:'Liberation Sans', sans-serif;transform:scaleX(0.9093478260869565);transform-origin:100% 0;">($16.00)</div>
<div class="t" style="left:565.30px;width:63.20px;text-align:right;top:321.11px;font-size:9.2px;line-height:9.2px;color:#1c1c1c;font-weight:normal;font-style:normal;font-family:'Liberation Sans', sans-serif;transform:scaleX(0.9093478260869565);transform-origin:100% 0;">$50.00</div>
<div class="t" style="left:632.50px;width:63.80px;text-align:right;top:321.11px;font-size:9.2px;line-height:9.2px;color:#1c1c1c;font-weight:normal;font-style:normal;font-family:'Liberation Sans', sans-serif;transform:scaleX(0.9093478260869565);transform-origin:100% 0;">$66.00</div>
<div class="t" style="left:700.30px;width:66.70px;text-align:right;top:321.11px;font-size:9.2px;line-height:9.2px;color:#f0262b;font-weight:normal;font-style:normal;font-family:'Liberation Sans', sans-serif;transform:scaleX(0.9093478260869565);transform-origin:100% 0;">($16.00)</div>
<div class="t" style="left:37.00px;top:346.37px;font-size:8.9px;line-height:8.9px;color:#1c1c1c;font-weight:normal;font-style:normal;font-family:'Liberation Sans', sans-serif;transform:scaleX(0.8837638597542705);transform-origin:0 0;">Faucets</div>
<div class="t" style="left:113.00px;top:346.37px;font-size:8.9px;line-height:8.9px;color:#1c1c1c;font-weight:normal;font-style:normal;font-family:'Liberation Sans', sans-serif;transform:scaleX(0.9163257298468567);transform-origin:0 0;">Sink faucet, standard</div>
<div class="t" style="left:293.30px;width:68.20px;text-align:right;top:346.11px;font-size:9.2px;line-height:9.2px;color:#1c1c1c;font-weight:normal;font-style:normal;font-family:'Liberation Sans', sans-serif;transform:scaleX(0.9093478260869565);transform-origin:100% 0;">1</div>
<div class="t" style="left:362.50px;width:64.00px;text-align:right;top:346.11px;font-size:9.2px;line-height:9.2px;color:#1c1c1c;font-weight:normal;font-style:normal;font-family:'Liberation Sans', sans-serif;transform:scaleX(0.9093478260869565);transform-origin:100% 0;">$90.00</div>
<div class="t" style="left:430.50px;width:63.20px;text-align:right;top:346.11px;font-size:9.2px;line-height:9.2px;color:#1c1c1c;font-weight:normal;font-style:normal;font-family:'Liberation Sans', sans-serif;transform:scaleX(0.9093478260869565);transform-origin:100% 0;">$108.00</div>
<div class="t" style="left:497.70px;width:66.60px;text-align:right;top:346.11px;font-size:9.2px;line-height:9.2px;color:#f0262b;font-weight:normal;font-style:normal;font-family:'Liberation Sans', sans-serif;transform:scaleX(0.9093478260869565);transform-origin:100% 0;">($18.00)</div>
<div class="t" style="left:565.30px;width:63.20px;text-align:right;top:346.11px;font-size:9.2px;line-height:9.2px;color:#1c1c1c;font-weight:normal;font-style:normal;font-family:'Liberation Sans', sans-serif;transform:scaleX(0.9093478260869565);transform-origin:100% 0;">$90.00</div>
<div class="t" style="left:632.50px;width:63.80px;text-align:right;top:346.11px;font-size:9.2px;line-height:9.2px;color:#1c1c1c;font-weight:normal;font-style:normal;font-family:'Liberation Sans', sans-serif;transform:scaleX(0.9093478260869565);transform-origin:100% 0;">$108.00</div>
<div class="t" style="left:700.30px;width:66.70px;text-align:right;top:346.11px;font-size:9.2px;line-height:9.2px;color:#f0262b;font-weight:normal;font-style:normal;font-family:'Liberation Sans', sans-serif;transform:scaleX(0.9093478260869565);transform-origin:100% 0;">($18.00)</div>
<div style="left:36.00px;top:356.50px;width:75.50px;height:24.00px;background:#e3ebdf"></div>
<div style="left:111.50px;top:356.50px;width:453.80px;height:24.00px;background:#c0d5e9"></div>
<div style="left:565.30px;top:356.50px;width:202.70px;height:24.00px;background:#f4f1dc"></div>
<div class="t" style="left:37.00px;top:370.37px;font-size:8.9px;line-height:8.9px;color:#1c1c1c;font-weight:normal;font-style:normal;font-family:'Liberation Sans', sans-serif;transform:scaleX(0.9294046207233947);transform-origin:0 0;">Flooring</div>
<div class="t" style="left:113.00px;top:370.37px;font-size:8.9px;line-height:8.9px;color:#1c1c1c;font-weight:normal;font-style:normal;font-family:'Liberation Sans', sans-serif;transform:scaleX(0.9338754067782411);transform-origin:0 0;">Ceramic tile, standard (qty. in sq. ft.)</div>
<div class="t" style="left:293.30px;width:68.20px;text-align:right;top:370.11px;font-size:9.2px;line-height:9.2px;color:#1c1c1c;font-weight:normal;font-style:normal;font-family:'Liberation Sans', sans-serif;transform:scaleX(0.9093478260869565);transform-origin:100% 0;">35</div>
<div class="t" style="left:362.50px;width:64.00px;text-align:right;top:370.11px;font-size:9.2px;line-height:9.2px;color:#1c1c1c;font-weight:normal;font-style:normal;font-family:'Liberation Sans', sans-serif;transform:scaleX(0.9093478260869565);transform-origin:100% 0;">$20.00</div>
<div class="t" style="left:430.50px;width:63.20px;text-align:right;top:370.11px;font-size:9.2px;line-height:9.2px;color:#1c1c1c;font-weight:normal;font-style:normal;font-family:'Liberation Sans', sans-serif;transform:scaleX(0.9093478260869565);transform-origin:100% 0;">$38.00</div>
<div class="t" style="left:497.70px;width:66.60px;text-align:right;top:370.11px;font-size:9.2px;line-height:9.2px;color:#f0262b;font-weight:normal;font-style:normal;font-family:'Liberation Sans', sans-serif;transform:scaleX(0.9093478260869565);transform-origin:100% 0;">($18.00)</div>
<div class="t" style="left:565.30px;width:63.20px;text-align:right;top:370.11px;font-size:9.2px;line-height:9.2px;color:#1c1c1c;font-weight:normal;font-style:normal;font-family:'Liberation Sans', sans-serif;transform:scaleX(0.9093478260869565);transform-origin:100% 0;">$700.00</div>
<div class="t" style="left:632.50px;width:63.80px;text-align:right;top:370.11px;font-size:9.2px;line-height:9.2px;color:#1c1c1c;font-weight:normal;font-style:normal;font-family:'Liberation Sans', sans-serif;transform:scaleX(0.9093478260869565);transform-origin:100% 0;">$1,330.00</div>
<div class="t" style="left:700.30px;width:66.70px;text-align:right;top:370.11px;font-size:9.2px;line-height:9.2px;color:#f0262b;font-weight:normal;font-style:normal;font-family:'Liberation Sans', sans-serif;transform:scaleX(0.9093478260869565);transform-origin:100% 0;">($630.00)</div>
<div class="t" style="left:37.00px;top:395.37px;font-size:8.9px;line-height:8.9px;color:#1c1c1c;font-weight:normal;font-style:normal;font-family:'Liberation Sans', sans-serif;transform:scaleX(0.9279288254872783);transform-origin:0 0;">Hardware</div>
<div class="t" style="left:113.00px;top:395.37px;font-size:8.9px;line-height:8.9px;color:#1c1c1c;font-weight:normal;font-style:normal;font-family:'Liberation Sans', sans-serif;transform:scaleX(0.922552336321299);transform-origin:0 0;">Towel bar, standard</div>
<div class="t" style="left:293.30px;width:68.20px;text-align:right;top:395.11px;font-size:9.2px;line-height:9.2px;color:#1c1c1c;font-weight:normal;font-style:normal;font-family:'Liberation Sans', sans-serif;transform:scaleX(0.9093478260869565);transform-origin:100% 0;">2</div>
<div class="t" style="left:362.50px;width:64.00px;text-align:right;top:395.11px;font-size:9.2px;line-height:9.2px;color:#1c1c1c;font-weight:normal;font-style:normal;font-family:'Liberation Sans', sans-serif;transform:scaleX(0.9093478260869565);transform-origin:100% 0;">$10.00</div>
<div class="t" style="left:430.50px;width:63.20px;text-align:right;top:395.11px;font-size:9.2px;line-height:9.2px;color:#1c1c1c;font-weight:normal;font-style:normal;font-family:'Liberation Sans', sans-serif;transform:scaleX(0.9093478260869565);transform-origin:100% 0;">$29.00</div>
<div class="t" style="left:497.70px;width:66.60px;text-align:right;top:395.11px;font-size:9.2px;line-height:9.2px;color:#f0262b;font-weight:normal;font-style:normal;font-family:'Liberation Sans', sans-serif;transform:scaleX(0.9093478260869565);transform-origin:100% 0;">($19.00)</div>
<div class="t" style="left:565.30px;width:63.20px;text-align:right;top:395.11px;font-size:9.2px;line-height:9.2px;color:#1c1c1c;font-weight:normal;font-style:normal;font-family:'Liberation Sans', sans-serif;transform:scaleX(0.9093478260869565);transform-origin:100% 0;">$20.00</div>
<div class="t" style="left:632.50px;width:63.80px;text-align:right;top:395.11px;font-size:9.2px;line-height:9.2px;color:#1c1c1c;font-weight:normal;font-style:normal;font-family:'Liberation Sans', sans-serif;transform:scaleX(0.9093478260869565);transform-origin:100% 0;">$58.00</div>
<div class="t" style="left:700.30px;width:66.70px;text-align:right;top:395.11px;font-size:9.2px;line-height:9.2px;color:#f0262b;font-weight:normal;font-style:normal;font-family:'Liberation Sans', sans-serif;transform:scaleX(0.9093478260869565);transform-origin:100% 0;">($38.00)</div>
<div style="left:36.00px;top:405.50px;width:75.50px;height:25.00px;background:#e3ebdf"></div>
<div style="left:111.50px;top:405.50px;width:453.80px;height:25.00px;background:#c0d5e9"></div>
<div style="left:565.30px;top:405.50px;width:202.70px;height:25.00px;background:#f4f1dc"></div>
<div class="t" style="left:37.00px;top:420.37px;font-size:8.9px;line-height:8.9px;color:#1c1c1c;font-weight:normal;font-style:normal;font-family:'Liberation Sans', sans-serif;transform:scaleX(0.9279288254872783);transform-origin:0 0;">Hardware</div>
<div class="t" style="left:113.00px;top:420.37px;font-size:8.9px;line-height:8.9px;color:#1c1c1c;font-weight:normal;font-style:normal;font-family:'Liberation Sans', sans-serif;transform:scaleX(0.9324141673844);transform-origin:0 0;">Toilet Paper holder</div>
<div class="t" style="left:293.30px;width:68.20px;text-align:right;top:420.11px;font-size:9.2px;line-height:9.2px;color:#1c1c1c;font-weight:normal;font-style:normal;font-family:'Liberation Sans', sans-serif;transform:scaleX(0.9093478260869565);transform-origin:100% 0;">1</div>
<div class="t" style="left:362.50px;width:64.00px;text-align:right;top:420.11px;font-size:9.2px;line-height:9.2px;color:#1c1c1c;font-weight:normal;font-style:normal;font-family:'Liberation Sans', sans-serif;transform:scaleX(0.9093478260869565);transform-origin:100% 0;">$5.00</div>
<div class="t" style="left:430.50px;width:63.20px;text-align:right;top:420.11px;font-size:9.2px;line-height:9.2px;color:#1c1c1c;font-weight:normal;font-style:normal;font-family:'Liberation Sans', sans-serif;transform:scaleX(0.9093478260869565);transform-origin:100% 0;">$23.00</div>
<div class="t" style="left:497.70px;width:66.60px;text-align:right;top:420.11px;font-size:9.2px;line-height:9.2px;color:#f0262b;font-weight:normal;font-style:normal;font-family:'Liberation Sans', sans-serif;transform:scaleX(0.9093478260869565);transform-origin:100% 0;">($18.00)</div>
<div class="t" style="left:565.30px;width:63.20px;text-align:right;top:420.11px;font-size:9.2px;line-height:9.2px;color:#1c1c1c;font-weight:normal;font-style:normal;font-family:'Liberation Sans', sans-serif;transform:scaleX(0.9093478260869565);transform-origin:100% 0;">$5.00</div>
<div class="t" style="left:632.50px;width:63.80px;text-align:right;top:420.11px;font-size:9.2px;line-height:9.2px;color:#1c1c1c;font-weight:normal;font-style:normal;font-family:'Liberation Sans', sans-serif;transform:scaleX(0.9093478260869565);transform-origin:100% 0;">$23.00</div>
<div class="t" style="left:700.30px;width:66.70px;text-align:right;top:420.11px;font-size:9.2px;line-height:9.2px;color:#f0262b;font-weight:normal;font-style:normal;font-family:'Liberation Sans', sans-serif;transform:scaleX(0.9093478260869565);transform-origin:100% 0;">($18.00)</div>
<div class="t" style="left:37.00px;top:444.37px;font-size:8.9px;line-height:8.9px;color:#1c1c1c;font-weight:normal;font-style:normal;font-family:'Liberation Sans', sans-serif;transform:scaleX(0.9328207886852758);transform-origin:0 0;">Lighting</div>
<div class="t" style="left:113.00px;top:444.37px;font-size:8.9px;line-height:8.9px;color:#1c1c1c;font-weight:normal;font-style:normal;font-family:'Liberation Sans', sans-serif;transform:scaleX(0.9018904259420303);transform-origin:0 0;">Recessed lights, standard</div>
<div class="t" style="left:293.30px;width:68.20px;text-align:right;top:444.11px;font-size:9.2px;line-height:9.2px;color:#1c1c1c;font-weight:normal;font-style:normal;font-family:'Liberation Sans', sans-serif;transform:scaleX(0.9093478260869565);transform-origin:100% 0;">4</div>
<div class="t" style="left:362.50px;width:64.00px;text-align:right;top:444.11px;font-size:9.2px;line-height:9.2px;color:#1c1c1c;font-weight:normal;font-style:normal;font-family:'Liberation Sans', sans-serif;transform:scaleX(0.9093478260869565);transform-origin:100% 0;">$30.00</div>
<div class="t" style="left:430.50px;width:63.20px;text-align:right;top:444.11px;font-size:9.2px;line-height:9.2px;color:#1c1c1c;font-weight:normal;font-style:normal;font-family:'Liberation Sans', sans-serif;transform:scaleX(0.9093478260869565);transform-origin:100% 0;">$40.00</div>
<div class="t" style="left:497.70px;width:66.60px;text-align:right;top:444.11px;font-size:9.2px;line-height:9.2px;color:#f0262b;font-weight:normal;font-style:normal;font-family:'Liberation Sans', sans-serif;transform:scaleX(0.9093478260869565);transform-origin:100% 0;">($10.00)</div>
<div class="t" style="left:565.30px;width:63.20px;text-align:right;top:444.11px;font-size:9.2px;line-height:9.2px;color:#1c1c1c;font-weight:normal;font-style:normal;font-family:'Liberation Sans', sans-serif;transform:scaleX(0.9093478260869565);transform-origin:100% 0;">$120.00</div>
<div class="t" style="left:632.50px;width:63.80px;text-align:right;top:444.11px;font-size:9.2px;line-height:9.2px;color:#1c1c1c;font-weight:normal;font-style:normal;font-family:'Liberation Sans', sans-serif;transform:scaleX(0.9093478260869565);transform-origin:100% 0;">$160.00</div>
<div class="t" style="left:700.30px;width:66.70px;text-align:right;top:444.11px;font-size:9.2px;line-height:9.2px;color:#f0262b;font-weight:normal;font-style:normal;font-family:'Liberation Sans', sans-serif;transform:scaleX(0.9093478260869565);transform-origin:100% 0;">($40.00)</div>
<div style="left:36.00px;top:454.50px;width:75.50px;height:25.00px;background:#e3ebdf"></div>
<div style="left:111.50px;top:454.50px;width:453.80px;height:25.00px;background:#c0d5e9"></div>
<div style="left:565.30px;top:454.50px;width:202.70px;height:25.00px;background:#f4f1dc"></div>
<div class="t" style="left:37.00px;top:469.37px;font-size:8.9px;line-height:8.9px;color:#1c1c1c;font-weight:normal;font-style:normal;font-family:'Liberation Sans', sans-serif;transform:scaleX(0.8708815191468298);transform-origin:0 0;">Sinks</div>
<div class="t" style="left:113.00px;top:469.37px;font-size:8.9px;line-height:8.9px;color:#1c1c1c;font-weight:normal;font-style:normal;font-family:'Liberation Sans', sans-serif;transform:scaleX(0.9210796834938086);transform-origin:0 0;">Lavatory, standard</div>
<div class="t" style="left:293.30px;width:68.20px;text-align:right;top:469.11px;font-size:9.2px;line-height:9.2px;color:#1c1c1c;font-weight:normal;font-style:normal;font-family:'Liberation Sans', sans-serif;transform:scaleX(0.9093478260869565);transform-origin:100% 0;">2</div>
<div class="t" style="left:362.50px;width:64.00px;text-align:right;top:469.11px;font-size:9.2px;line-height:9.2px;color:#1c1c1c;font-weight:normal;font-style:normal;font-family:'Liberation Sans', sans-serif;transform:scaleX(0.9093478260869565);transform-origin:100% 0;">$65.00</div>
<div class="t" style="left:430.50px;width:63.20px;text-align:right;top:469.11px;font-size:9.2px;line-height:9.2px;color:#1c1c1c;font-weight:normal;font-style:normal;font-family:'Liberation Sans', sans-serif;transform:scaleX(0.9093478260869565);transform-origin:100% 0;">$68.00</div>
<div class="t" style="left:497.70px;width:66.60px;text-align:right;top:469.11px;font-size:9.2px;line-height:9.2px;color:#f0262b;font-weight:normal;font-style:normal;font-family:'Liberation Sans', sans-serif;transform:scaleX(0.9093478260869565);transform-origin:100% 0;">($3.00)</div>
<div class="t" style="left:565.30px;width:63.20px;text-align:right;top:469.11px;font-size:9.2px;line-height:9.2px;color:#1c1c1c;font-weight:normal;font-style:normal;font-family:'Liberation Sans', sans-serif;transform:scaleX(0.9093478260869565);transform-origin:100% 0;">$130.00</div>
<div class="t" style="left:632.50px;width:63.80px;text-align:right;top:469.11px;font-size:9.2px;line-height:9.2px;color:#1c1c1c;font-weight:normal;font-style:normal;font-family:'Liberation Sans', sans-serif;transform:scaleX(0.9093478260869565);transform-origin:100% 0;">$136.00</div>
<div class="t" style="left:700.30px;width:66.70px;text-align:right;top:469.11px;font-size:9.2px;line-height:9.2px;color:#f0262b;font-weight:normal;font-style:normal;font-family:'Liberation Sans', sans-serif;transform:scaleX(0.9093478260869565);transform-origin:100% 0;">($6.00)</div>
<div class="t" style="left:37.00px;top:493.37px;font-size:8.9px;line-height:8.9px;color:#1c1c1c;font-weight:normal;font-style:normal;font-family:'Liberation Sans', sans-serif;transform:scaleX(0.9641304288047692);transform-origin:0 0;">Other</div>
<div class="t" style="left:113.00px;top:493.11px;font-size:9.2px;line-height:9.2px;color:#1c1c1c;font-weight:normal;font-style:normal;font-family:'Liberation Sans', sans-serif;transform:scaleX(0.9093478260869565);transform-origin:0 0;"></div>
<div class="t" style="left:293.30px;width:68.20px;text-align:right;top:493.11px;font-size:9.2px;line-height:9.2px;color:#1c1c1c;font-weight:normal;font-style:normal;font-family:'Liberation Sans', sans-serif;transform:scaleX(0.9093478260869565);transform-origin:100% 0;">1</div>
<div class="t" style="left:362.50px;width:64.00px;text-align:right;top:493.11px;font-size:9.2px;line-height:9.2px;color:#1c1c1c;font-weight:normal;font-style:normal;font-family:'Liberation Sans', sans-serif;transform:scaleX(0.9093478260869565);transform-origin:100% 0;">$10.00</div>
<div class="t" style="left:430.50px;width:63.20px;text-align:right;top:493.11px;font-size:9.2px;line-height:9.2px;color:#1c1c1c;font-weight:normal;font-style:normal;font-family:'Liberation Sans', sans-serif;transform:scaleX(0.9093478260869565);transform-origin:100% 0;">$27.00</div>
<div class="t" style="left:497.70px;width:66.60px;text-align:right;top:493.11px;font-size:9.2px;line-height:9.2px;color:#f0262b;font-weight:normal;font-style:normal;font-family:'Liberation Sans', sans-serif;transform:scaleX(0.9093478260869565);transform-origin:100% 0;">($17.00)</div>
<div class="t" style="left:565.30px;width:63.20px;text-align:right;top:493.11px;font-size:9.2px;line-height:9.2px;color:#1c1c1c;font-weight:normal;font-style:normal;font-family:'Liberation Sans', sans-serif;transform:scaleX(0.9093478260869565);transform-origin:100% 0;">$10.00</div>
<div class="t" style="left:632.50px;width:63.80px;text-align:right;top:493.11px;font-size:9.2px;line-height:9.2px;color:#1c1c1c;font-weight:normal;font-style:normal;font-family:'Liberation Sans', sans-serif;transform:scaleX(0.9093478260869565);transform-origin:100% 0;">$27.00</div>
<div class="t" style="left:700.30px;width:66.70px;text-align:right;top:493.11px;font-size:9.2px;line-height:9.2px;color:#f0262b;font-weight:normal;font-style:normal;font-family:'Liberation Sans', sans-serif;transform:scaleX(0.9093478260869565);transform-origin:100% 0;">($17.00)</div>
<div style="left:36.00px;top:503.50px;width:732.00px;height:25.00px;background:#f0f0f0"></div>
<div class="t" style="left:37.00px;top:518.37px;font-size:8.9px;line-height:8.9px;color:#1c1c1c;font-weight:bold;font-style:normal;font-family:'Liberation Sans', sans-serif;-webkit-text-stroke:0.3px currentColor;transform:scaleX(0.8874322727968347);transform-origin:0 0;">Subtotal</div>
<div class="t" style="left:362.50px;width:64.00px;text-align:right;top:518.11px;font-size:9.2px;line-height:9.2px;color:#1c1c1c;font-weight:bold;font-style:normal;font-family:'Liberation Sans', sans-serif;-webkit-text-stroke:0.3px currentColor;transform:scaleX(0.9286956521739131);transform-origin:100% 0;">$1,252.50</div>
<div class="t" style="left:430.50px;width:63.20px;text-align:right;top:518.11px;font-size:9.2px;line-height:9.2px;color:#1c1c1c;font-weight:bold;font-style:normal;font-family:'Liberation Sans', sans-serif;-webkit-text-stroke:0.3px currentColor;transform:scaleX(0.9286956521739131);transform-origin:100% 0;">$1,450.00</div>
<div class="t" style="left:497.70px;width:66.60px;text-align:right;top:518.11px;font-size:9.2px;line-height:9.2px;color:#f0262b;font-weight:bold;font-style:normal;font-family:'Liberation Sans', sans-serif;-webkit-text-stroke:0.3px currentColor;transform:scaleX(0.9286956521739131);transform-origin:100% 0;">($197.50)</div>
<div class="t" style="left:565.30px;width:63.20px;text-align:right;top:518.11px;font-size:9.2px;line-height:9.2px;color:#1c1c1c;font-weight:bold;font-style:normal;font-family:'Liberation Sans', sans-serif;-webkit-text-stroke:0.3px currentColor;transform:scaleX(0.9286956521739131);transform-origin:100% 0;">$2,387.50</div>
<div class="t" style="left:632.50px;width:63.80px;text-align:right;top:518.11px;font-size:9.2px;line-height:9.2px;color:#1c1c1c;font-weight:bold;font-style:normal;font-family:'Liberation Sans', sans-serif;-webkit-text-stroke:0.3px currentColor;transform:scaleX(0.9286956521739131);transform-origin:100% 0;">$3,160.00</div>
<div class="t" style="left:700.30px;width:66.70px;text-align:right;top:518.11px;font-size:9.2px;line-height:9.2px;color:#f0262b;font-weight:bold;font-style:normal;font-family:'Liberation Sans', sans-serif;-webkit-text-stroke:0.3px currentColor;transform:scaleX(0.9286956521739131);transform-origin:100% 0;">($772.50)</div>
<div class="t" style="left:37.00px;top:542.37px;font-size:8.9px;line-height:8.9px;color:#1c1c1c;font-weight:bold;font-style:normal;font-family:'Liberation Sans', sans-serif;-webkit-text-stroke:0.3px currentColor;transform:scaleX(0.8816453532912959);transform-origin:0 0;">Unexpected Costs (add 30% estimated)</div>
<div class="t" style="left:388.50px;top:542.11px;font-size:9.2px;line-height:9.2px;color:#1c1c1c;font-weight:bold;font-style:normal;font-family:'Liberation Sans', sans-serif;-webkit-text-stroke:0.3px currentColor;transform:scaleX(0.9286956521739131);transform-origin:0 0;">$375.75</div>
<div class="t" style="left:590.30px;top:542.11px;font-size:9.2px;line-height:9.2px;color:#1c1c1c;font-weight:bold;font-style:normal;font-family:'Liberation Sans', sans-serif;-webkit-text-stroke:0.3px currentColor;transform:scaleX(0.9286956521739131);transform-origin:0 0;">$716.25</div>
<div class="t" style="left:37.00px;top:567.37px;font-size:8.9px;line-height:8.9px;color:#1c1c1c;font-weight:bold;font-style:normal;font-family:'Liberation Sans', sans-serif;-webkit-text-stroke:0.3px currentColor;transform:scaleX(0.8400155529266957);transform-origin:0 0;">Total costs</div>
<div class="t" style="left:388.50px;top:567.11px;font-size:9.2px;line-height:9.2px;color:#1c1c1c;font-weight:bold;font-style:normal;font-family:'Liberation Sans', sans-serif;-webkit-text-stroke:0.3px currentColor;transform:scaleX(0.9286956521739131);transform-origin:0 0;">$1,252.50</div>
<div class="t" style="left:590.30px;top:567.11px;font-size:9.2px;line-height:9.2px;color:#1c1c1c;font-weight:bold;font-style:normal;font-family:'Liberation Sans', sans-serif;-webkit-text-stroke:0.3px currentColor;transform:scaleX(0.9286956521739131);transform-origin:0 0;">$3,103.75</div>
<div style="left:36.00px;top:110.00px;width:732.00px;height:1.00px;background:#d3e2ce"></div>
<div style="left:36.00px;top:135.00px;width:732.00px;height:1.00px;background:#d3e2ce"></div>
<div style="left:36.00px;top:159.00px;width:732.00px;height:1.00px;background:#d3e2ce"></div>
<div style="left:36.00px;top:184.00px;width:732.00px;height:1.00px;background:#d3e2ce"></div>
<div style="left:36.00px;top:208.00px;width:732.00px;height:1.00px;background:#d3e2ce"></div>
<div style="left:36.00px;top:233.00px;width:732.00px;height:1.00px;background:#d3e2ce"></div>
<div style="left:36.00px;top:257.00px;width:732.00px;height:1.00px;background:#d3e2ce"></div>
<div style="left:36.00px;top:282.00px;width:732.00px;height:1.00px;background:#d3e2ce"></div>
<div style="left:36.00px;top:306.00px;width:732.00px;height:1.00px;background:#d3e2ce"></div>
<div style="left:36.00px;top:331.00px;width:732.00px;height:1.00px;background:#d3e2ce"></div>
<div style="left:36.00px;top:356.00px;width:732.00px;height:1.00px;background:#d3e2ce"></div>
<div style="left:36.00px;top:380.00px;width:732.00px;height:1.00px;background:#d3e2ce"></div>
<div style="left:36.00px;top:405.00px;width:732.00px;height:1.00px;background:#d3e2ce"></div>
<div style="left:36.00px;top:430.00px;width:732.00px;height:1.00px;background:#d3e2ce"></div>
<div style="left:36.00px;top:454.00px;width:732.00px;height:1.00px;background:#d3e2ce"></div>
<div style="left:36.00px;top:479.00px;width:732.00px;height:1.00px;background:#d3e2ce"></div>
<div style="left:36.00px;top:503.00px;width:732.00px;height:1.00px;background:#9cc090"></div>
<div style="left:36.00px;top:528.00px;width:732.00px;height:1.00px;background:#d3e2ce"></div>
<div style="left:36.00px;top:552.00px;width:732.00px;height:1.00px;background:#d3e2ce"></div>
<div style="left:36.00px;top:577.00px;width:732.00px;height:1.00px;background:#d3e2ce"></div>
<div style="left:362.50px;top:61.00px;width:202.80px;height:1.00px;background:#bdd5b8"></div>
<div style="left:565.30px;top:61.00px;width:202.70px;height:1.00px;background:#b3d7d0"></div>
<div style="left:362.50px;top:62.00px;width:202.80px;height:1.00px;background:#d3dfd8"></div>
<div style="left:565.30px;top:62.00px;width:202.70px;height:1.00px;background:#dbe9df"></div>
<div style="left:362.00px;top:61.50px;width:1.00px;height:467.00px;background:#d3e2ce"></div>
<div style="left:564.80px;top:110.50px;width:1.00px;height:418.00px;background:#d3e2ce"></div>
<div style="left:564.80px;top:61.50px;width:1.00px;height:24.00px;background:#bcd4b5"></div>
<div style="left:362.50px;top:86.00px;width:405.50px;height:1.00px;background:rgba(150,195,145,0.55)"></div>
<div style="left:292.80px;top:85.50px;width:1.00px;height:25.00px;background:#d3e2ce"></div>
<div style="left:292.80px;top:110.50px;width:1.00px;height:418.00px;background:#9cc090"></div>
<div style="left:35.50px;top:110.50px;width:1.00px;height:467.00px;background:#d3e2ce"></div>
<div style="left:767.00px;top:61.50px;width:1.00px;height:516.00px;background:#d3e2ce"></div>
<div style="left:111.00px;top:110.50px;width:1.00px;height:393.00px;background:#d3e2ce"></div>
<div style="left:430.00px;top:110.50px;width:1.00px;height:393.00px;background:#d3e2ce"></div>
<div style="left:497.20px;top:110.50px;width:1.00px;height:393.00px;background:#d3e2ce"></div>
<div style="left:632.00px;top:110.50px;width:1.00px;height:393.00px;background:#d3e2ce"></div>
<div style="left:699.80px;top:110.50px;width:1.00px;height:393.00px;background:#d3e2ce"></div>
</div></body></html>
